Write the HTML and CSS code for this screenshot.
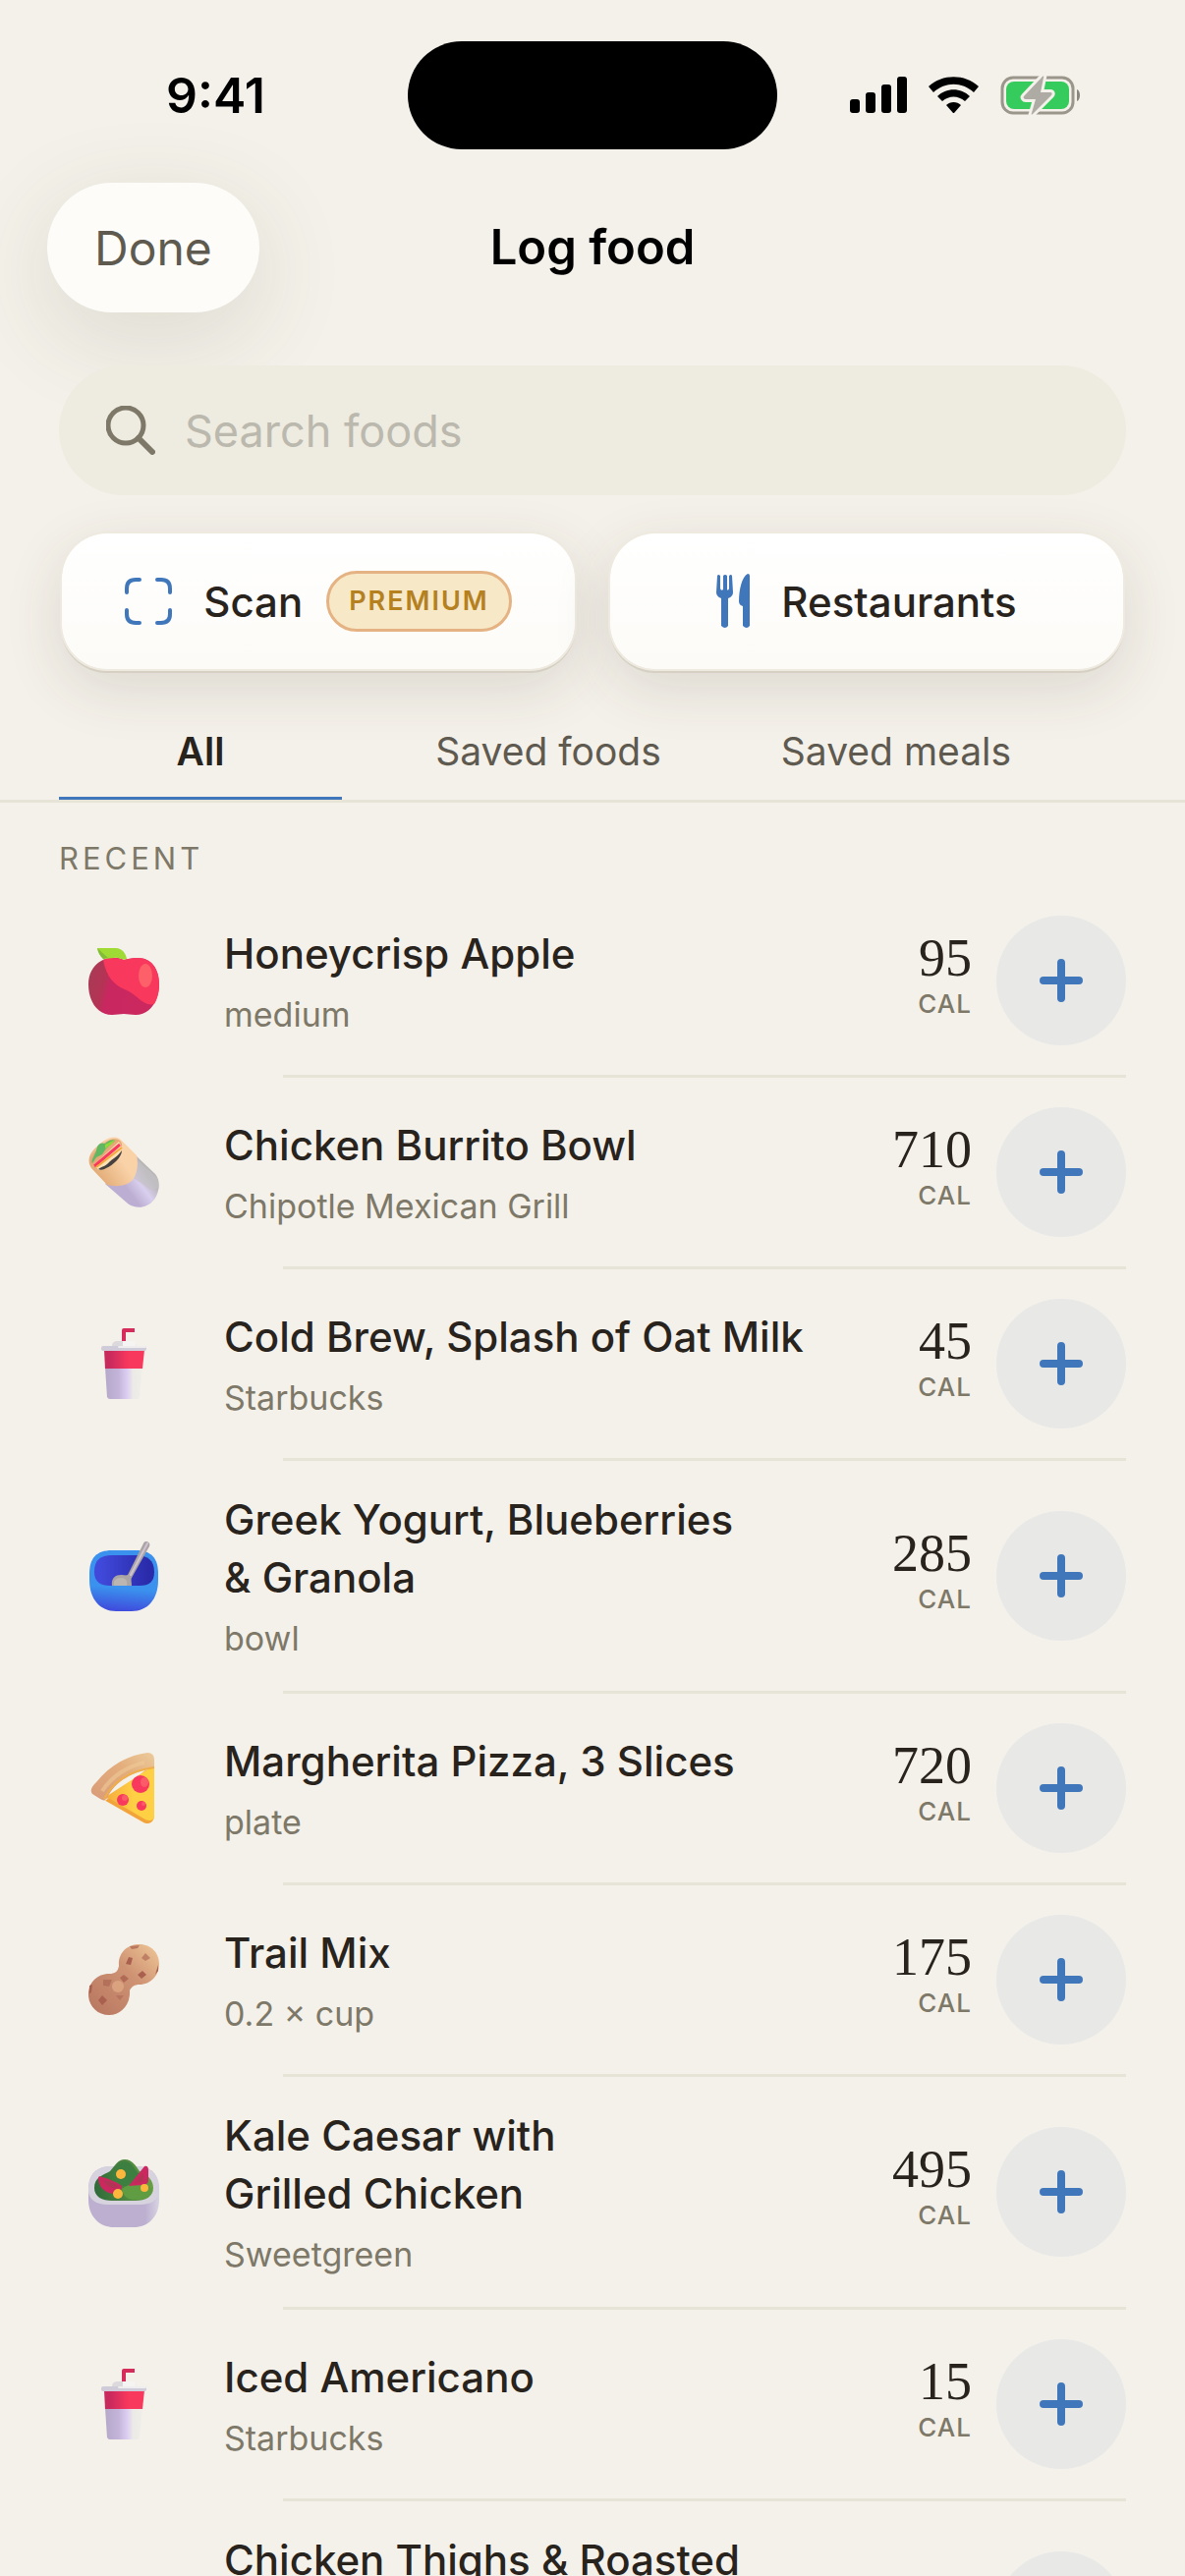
FILE: index.html
```html
<!DOCTYPE html>
<html lang="en">
<head>
    <meta charset="UTF-8">
    <meta name="viewport" content="width=device-width, initial-scale=1.0">
    <title>Log food</title>
    <link rel="stylesheet" href="styles.css">
</head>
<body>
<!-- shared icons -->
<svg class="sprite" aria-hidden="true">
    <defs>
        <linearGradient id="apple-body" x1="0" y1="0.4" x2="1" y2="0.6">
            <stop offset="0" stop-color="#a93a55"/>
            <stop offset="0.22" stop-color="#b53355"/>
            <stop offset="0.3" stop-color="#c8285f"/>
            <stop offset="1" stop-color="#cc2860"/>
        </linearGradient>
        <linearGradient id="cup-body">
            <stop offset="0" stop-color="#b5a8c8"/>
            <stop offset="0.35" stop-color="#c3b3da"/>
            <stop offset="0.6" stop-color="#dccff2"/>
            <stop offset="0.75" stop-color="#eceae6"/>
            <stop offset="1" stop-color="#f0eee8"/>
        </linearGradient>
        <linearGradient id="cup-red">
            <stop offset="0.15" stop-color="#c92a5e"/>
            <stop offset="0.6" stop-color="#f8385c"/>
        </linearGradient>
        <linearGradient id="foil" x1="0.2" y1="0.8" x2="0.9" y2="0.3">
            <stop offset="0.3" stop-color="#bcaed2"/>
            <stop offset="0.6" stop-color="#d9cfee"/>
            <stop offset="0.85" stop-color="#b9b6b8"/>
        </linearGradient>
        <linearGradient id="wrap" x1="0" y1="1" x2="1" y2="0.3">
            <stop offset="0.2" stop-color="#e2ab76"/>
            <stop offset="0.7" stop-color="#f9d2a8"/>
        </linearGradient>
        <linearGradient id="bowl-out" x1="0.3" y1="0" x2="0.2" y2="1">
            <stop offset="0.6" stop-color="#3a92ee"/>
            <stop offset="0.95" stop-color="#3f4fdd"/>
        </linearGradient>
        <linearGradient id="bowl-in">
            <stop offset="0.1" stop-color="#4049da"/>
            <stop offset="0.9" stop-color="#2a2bab"/>
        </linearGradient>
        <linearGradient id="crust" x1="0" y1="1" x2="1" y2="0">
            <stop offset="0" stop-color="#d99b78"/>
            <stop offset="0.6" stop-color="#e4ae7c"/>
            <stop offset="1" stop-color="#eccb9c"/>
        </linearGradient>
        <linearGradient id="cheese" x1="0" y1="0.5" x2="1" y2="0.5">
            <stop offset="0" stop-color="#f5a93c"/>
            <stop offset="0.6" stop-color="#ffd044"/>
        </linearGradient>
        <linearGradient id="peanut-shell" x1="0" y1="1" x2="1" y2="0">
            <stop offset="0.1" stop-color="#bb7a63"/>
            <stop offset="0.6" stop-color="#cf9474"/>
            <stop offset="1" stop-color="#f0c898"/>
        </linearGradient>
        <linearGradient id="leaves">
            <stop offset="0" stop-color="#2f6a3a"/>
            <stop offset="1" stop-color="#68a043"/>
        </linearGradient>
        <linearGradient id="dish">
            <stop offset="0.8" stop-color="#bcafd0"/>
            <stop offset="1" stop-color="#d8d4e2"/>
        </linearGradient>
    </defs>

    <symbol id="plus" viewBox="0 0 44 44">
        <path d="M22 4v36M4 22h36" stroke="#4077bb" stroke-width="8" stroke-linecap="round"/>
    </symbol>

    <symbol id="apple" viewBox="0 0 72 72">
        <path d="M36 15C30 12 20 12 13 16C4 21 0 30 0 40C0 57 9 71 24 71C29 71 32 70 36 70C40 70 43 71 48 71C63 71 72 56 72 40C72 24 64 13 50 13C44 13 40 14 36 15Z" fill="url(#apple-body)"/>
        <path d="M15 15C22 12 30 13 36 15C40 14 44 13 50 13C64 13 72 24 72 40C72 48 70 55 67 60C56 63 49 50 39 46C26 41 18 32 15 15Z" fill="#f8385c"/>
        <ellipse cx="58" cy="31" rx="7" ry="12" fill="#fd6068"/>
        <path d="M9 3H28C34 3 38 8 39 14C34 16 31 12 26 13L15 14C12 11 10 8 9 3Z" fill="#a0da35"/>
        <path d="M9 3L20 13L15 14C12 11 10 8 9 3Z" fill="#82bd38"/>
    </symbol>

    <symbol id="burrito" viewBox="0 0 72 72">
        <path d="M48 19L68 38C74 45 72 57 67 64C60 73 48 74 40 68L17 48Z" fill="url(#foil)"/>
        <path d="M50 24L70 42L72 52L63 54L43 40Z" fill="#c5c2c6" opacity="0.7"/>
        <path d="M3 32C-2 24 1 16 10 9C19 0 28 -2 34 4L49 19C51 27 50 37 45 44C38 51 27 51 19 49Z" fill="url(#wrap)"/>
        <path d="M3 29C0 24 5 16 12 10C20 2 29 0 33 5C36 9 33 16 27 23C20 31 10 36 5 31Z" fill="#e5a877"/>
        <path d="M5 29L31 5L34 11C32 20 22 30 11 34Z" fill="#fde1b4"/>
        <path d="M10 33C14 30 18 30 21 26C25 22 28 22 34 14C34 21 25 29 18 32C15 34 12 34 10 33Z" fill="#47423f"/>
        <path d="M6 30L32 8" stroke="#f8385c" stroke-width="3"/>
        <path d="M8 31L34 11" stroke="#f4a73a" stroke-width="2"/>
        <path d="M4 27C2 25 6 20 8 14C9 8 12 5 17 7C20 4 25 2 27 4L18 12L14 18L8 21Z" fill="#62b862"/>
        <path d="M17 8L27 3L24 7L17 12Z" fill="#8edb35"/>
    </symbol>

    <symbol id="cup" viewBox="0 0 72 72">
        <path d="M36 15V2H47" fill="none" stroke="#d52c5c" stroke-width="4" stroke-linejoin="round"/>
        <path d="M24 18C24 14 27 13 30 13H42C46 13 48 15 49 18Z" fill="#dcd9dc"/>
        <path d="M35 13H46C48 14 48 17 49 18H35Z" fill="#f5f4f2"/>
        <path d="M17 40H55L52 70C52 71 51 72 50 72H22C20 72 20 71 19 70Z" fill="url(#cup-body)"/>
        <path d="M16 22H57L55 41H17Z" fill="url(#cup-red)"/>
        <rect x="13" y="18" width="46" height="5" rx="2" fill="#d0cbd8"/>
        <rect x="30" y="18" width="29" height="2" rx="1" fill="#efedee"/>
    </symbol>

    <symbol id="bowl" viewBox="0 0 72 72">
        <path d="M1 34C1 18 8 10 24 10H48C64 10 71 18 71 34V40C71 60 60 72 44 72H28C12 72 1 60 1 40Z" fill="url(#bowl-out)"/>
        <path d="M6 32C6 20 12 15 24 15H48C60 15 67 20 67 32C67 42 62 46 52 46H22C12 46 6 42 6 32Z" fill="url(#bowl-in)"/>
        <path d="M24 46C23 39 27 35 33 35C36 35 38 36 40 35L56 3C58 -1 64 2 62 6L44 38C43 40 44 42 44 46Z" fill="#aaa4a5"/>
        <path d="M26 46C25 41 28 38 33 38C38 38 40 41 39 46Z" fill="#bcb6b2"/>
        <path d="M60 3L43 35" stroke="#cfc3d2" stroke-width="2" stroke-linecap="round"/>
    </symbol>

    <symbol id="pizza" viewBox="0 0 72 72">
        <path d="M17 49L58 18L67 16V64C67 70 62 74 56 71L14 47Z" fill="#f2a43a"/>
        <path d="M16 46L62 16L67 15V66C66 69 62 70 58 68L22 47Z" fill="url(#cheese)"/>
        <path d="M4 42C1 38 4 34 8 30C22 12 42 2 60 0C65 0 67 3 67 7V15C46 19 27 29 19 46C17 49 15 49 12 47Z" fill="url(#crust)"/>
        <path d="M16 47C26 27 46 18 67 15" stroke="#efae4a" stroke-width="2" fill="none"/>
        <path d="M14 39C24 24 40 14 57 10" stroke="#efca98" stroke-width="4" fill="none" opacity="0.6"/>
        <circle cx="53" cy="32" r="9" fill="#f8385c"/>
        <circle cx="35" cy="48" r="6" fill="#f8385c"/>
        <circle cx="54" cy="54" r="5" fill="#f8385c"/>
        <ellipse cx="57" cy="30" rx="4" ry="5" fill="#fb5a68"/>
        <circle cx="37" cy="46" r="3" fill="#fb5a68"/>
        <circle cx="56" cy="52" r="2" fill="#fb5a68"/>
    </symbol>

    <symbol id="peanut" viewBox="0 0 72 72">
        <path d="M52 0C64 0 72 9 72 20C72 32 63 41 52 41C47 41 44 43 42 47C43 62 33 72 21 72C9 72 0 63 0 51C0 39 9 30 21 30C27 30 30 28 31 22C30 9 39 0 52 0Z" fill="url(#peanut-shell)"/>
        <g fill="#a9604f">
            <path d="M41 13L45 14L43 21L38 20Z"/>
            <path d="M58 9L63 14L58 17L54 14Z" opacity="0.6"/>
            <path d="M55 27L59 31L54 35L50 31Z"/>
            <path d="M36 31L41 35L36 39L32 34Z" opacity="0.8"/>
            <path d="M15 36H24L21 43L15 42Z" opacity="0.6"/>
            <path d="M14 52L19 57L14 62L10 57Z"/>
            <path d="M28 52H36L32 57Z" opacity="0.5"/>
            <path d="M42 2L52 1L50 4L44 5Z" opacity="0.7"/>
            <path d="M71 21V27L68 31Z"/>
            <path d="M1 42L4 41L3 49L1 50Z"/>
        </g>
        <circle cx="30" cy="43" r="6" fill="#e3ad87" opacity="0.7"/>
    </symbol>

    <symbol id="salad" viewBox="0 0 72 72">
        <path d="M0 34C0 18 8 10 24 10H48C64 10 72 18 72 34V44C72 62 60 72 46 72H26C12 72 0 62 0 44Z" fill="url(#dish)"/>
        <path d="M0 34C0 18 8 10 24 10H48C64 10 72 18 72 34C72 44 64 49 52 49H20C8 49 0 44 0 34Z" fill="#d6d3df"/>
        <path d="M6 32C6 21 15 19 22 15C28 8 30 3 37 3C44 3 48 9 52 15C60 18 66 24 66 32C66 41 58 45 48 45H24C14 45 6 41 6 32Z" fill="url(#leaves)"/>
        <path d="M24 20C28 11 31 5 37 5C44 5 47 14 52 18C47 26 40 32 33 30Z" fill="#3c7f40"/>
        <path d="M34 33C44 25 58 28 65 33C65 40 57 44 46 44C40 44 35 40 34 33Z" fill="#5f9c42"/>
        <path d="M10 22C10 20 12 20 14 21C22 23 30 27 34 30C34 34 31 37 25 38C16 37 10 30 10 22Z" fill="#cc2860"/>
        <path d="M15 24C22 25 28 28 31 31C26 34 18 31 15 24Z" fill="#b13355"/>
        <path d="M57 10C60 9 61 11 61 14V24C61 28 58 29 54 29L41 30Z" fill="#cc2860"/>
        <path d="M56 17V25L47 27Z" fill="#b13355"/>
        <g fill="#fcb73c">
            <circle cx="33" cy="18" r="5"/>
            <circle cx="30" cy="38" r="5"/>
            <circle cx="57" cy="32" r="4"/>
        </g>
    </symbol>
</svg>

<div class="app">
    <div class="status-bar">
        <div class="time">9:41</div>
        <div class="island"></div>
        <div class="indicators">
            <svg width="58" height="38" viewBox="0 0 58 38">
                <rect x="0" y="23" width="10" height="14" rx="3"/>
                <rect x="16" y="16" width="10" height="21" rx="3"/>
                <rect x="32" y="8" width="10" height="29" rx="3"/>
                <rect x="48" y="0" width="10" height="37" rx="3"/>
            </svg>
            <svg width="51" height="38" viewBox="0 0 51 38">
                <path d="M0 10C14 -3 37 -3 51 10L46 16C34 5 17 5 5 16Z"/>
                <path d="M9 20C18 11 33 11 42 20L37 25C30 19 21 19 14 25Z"/>
                <path d="M18 29C22 25 29 25 33 29L26 37H25Z"/>
            </svg>
            <svg width="82" height="42" viewBox="0 0 82 42">
                <rect x="2" y="3" width="72" height="36" rx="11" fill="none" stroke="#9a968c" stroke-width="3"/>
                <path d="M78 15C82 16 82 26 78 27Z" fill="#8a867d"/>
                <rect x="6" y="7" width="64" height="28" rx="8" fill="#35cb5d"/>
                <path d="M42 3C43 1 45 1 44 3L41 18H51C53 18 53 20 52 21L34 39C32 41 31 41 32 39L36 25H26C24 25 23 23 24 22Z" fill="#aeaaa4" stroke="#f4f1ea" stroke-width="6" stroke-linejoin="round" paint-order="stroke"/>
            </svg>
        </div>
    </div>

    <header class="nav">
        <button class="done">Done</button>
        <h1 class="title">Log food</h1>
    </header>

    <label class="search">
        <svg width="50" height="50" viewBox="0 0 50 50">
            <circle cx="20" cy="20" r="18"/>
            <path d="M33 33L47 47" stroke-width="6"/>
        </svg>
        <input type="text" placeholder="Search foods" aria-label="Search foods">
    </label>

    <div class="actions">
        <button class="action">
            <svg width="48" height="48" viewBox="0 0 48 48">
                <path d="M2 15V11Q2 2 11 2H15M33 2H37Q46 2 46 11V15M46 33V37Q46 46 37 46H33M15 46H11Q2 46 2 37V33" fill="none" stroke="#4077bb" stroke-width="4" stroke-linecap="round"/>
            </svg>
            <span>Scan</span>
            <span class="badge">PREMIUM</span>
        </button>
        <button class="action">
            <svg width="34" height="56" viewBox="0 0 34 56" fill="#4077bb">
                <path d="M1 2Q2 0 4 2V15Q5 18 7 16V2Q9 0 11 2V16Q12 18 13 15V2Q15 0 16 2L17 19Q17 23 12 25V53Q9 57 5 53V25Q0 23 0 19Z"/>
                <path d="M32 0Q34 0 34 2V53Q31 57 27 53V33Q23 32 23 28C23 16 26 3 32 0Z"/>
            </svg>
            <span>Restaurants</span>
        </button>
    </div>

    <nav class="tabs">
        <button class="tab active">All</button>
        <button class="tab">Saved foods</button>
        <button class="tab">Saved meals</button>
    </nav>

    <h2 class="section-title">RECENT</h2>
    <ul class="foods">
        <li class="food">
            <div class="row">
                <div class="picture"><svg><use href="#apple"/></svg></div>
                <div class="info">
                    <div class="name">Honeycrisp Apple</div>
                    <div class="detail">medium</div>
                </div>
                <div class="calories"><span class="number">95</span><span class="unit">CAL</span></div>
                <button class="add" aria-label="Add"><svg><use href="#plus"/></svg></button>
            </div>
        </li>
        <li class="food">
            <div class="row">
                <div class="picture"><svg><use href="#burrito"/></svg></div>
                <div class="info">
                    <div class="name">Chicken Burrito Bowl</div>
                    <div class="detail">Chipotle Mexican Grill</div>
                </div>
                <div class="calories"><span class="number">710</span><span class="unit">CAL</span></div>
                <button class="add" aria-label="Add"><svg><use href="#plus"/></svg></button>
            </div>
        </li>
        <li class="food">
            <div class="row">
                <div class="picture"><svg><use href="#cup"/></svg></div>
                <div class="info">
                    <div class="name">Cold Brew, Splash of Oat Milk</div>
                    <div class="detail">Starbucks</div>
                </div>
                <div class="calories"><span class="number">45</span><span class="unit">CAL</span></div>
                <button class="add" aria-label="Add"><svg><use href="#plus"/></svg></button>
            </div>
        </li>
        <li class="food">
            <div class="row">
                <div class="picture"><svg><use href="#bowl"/></svg></div>
                <div class="info">
                    <div class="name">Greek Yogurt, Blueberries<br>&amp; Granola</div>
                    <div class="detail">bowl</div>
                </div>
                <div class="calories"><span class="number">285</span><span class="unit">CAL</span></div>
                <button class="add" aria-label="Add"><svg><use href="#plus"/></svg></button>
            </div>
        </li>
        <li class="food">
            <div class="row">
                <div class="picture"><svg><use href="#pizza"/></svg></div>
                <div class="info">
                    <div class="name">Margherita Pizza, 3 Slices</div>
                    <div class="detail">plate</div>
                </div>
                <div class="calories"><span class="number">720</span><span class="unit">CAL</span></div>
                <button class="add" aria-label="Add"><svg><use href="#plus"/></svg></button>
            </div>
        </li>
        <li class="food">
            <div class="row">
                <div class="picture"><svg><use href="#peanut"/></svg></div>
                <div class="info">
                    <div class="name">Trail Mix</div>
                    <div class="detail">0.2 × cup</div>
                </div>
                <div class="calories"><span class="number">175</span><span class="unit">CAL</span></div>
                <button class="add" aria-label="Add"><svg><use href="#plus"/></svg></button>
            </div>
        </li>
        <li class="food">
            <div class="row">
                <div class="picture"><svg><use href="#salad"/></svg></div>
                <div class="info">
                    <div class="name">Kale Caesar with<br>Grilled Chicken</div>
                    <div class="detail">Sweetgreen</div>
                </div>
                <div class="calories"><span class="number">495</span><span class="unit">CAL</span></div>
                <button class="add" aria-label="Add"><svg><use href="#plus"/></svg></button>
            </div>
        </li>
        <li class="food">
            <div class="row">
                <div class="picture"><svg><use href="#cup"/></svg></div>
                <div class="info">
                    <div class="name">Iced Americano</div>
                    <div class="detail">Starbucks</div>
                </div>
                <div class="calories"><span class="number">15</span><span class="unit">CAL</span></div>
                <button class="add" aria-label="Add"><svg><use href="#plus"/></svg></button>
            </div>
        </li>
        <li class="food">
            <div class="row tall">
                <div class="picture"></div>
                <div class="info">
                    <div class="name">Chicken Thighs &amp; Roasted</div>
                </div>
                <button class="add" aria-label="Add"><svg><use href="#plus"/></svg></button>
            </div>
        </li>
    </ul>
</div>
</body>
</html>
```

FILE: styles.css
```css
* {
    box-sizing: border-box;
}

body {
    margin: 0;
    background: #f4f1ea;
    color: #28231c;
    font-family: Inter, "Liberation Sans", sans-serif;
}

button {
    border: none;
    padding: 0;
    background: none;
    color: inherit;
    font-family: inherit;
    cursor: pointer;
}

.sprite {
    position: absolute;
    width: 0;
    height: 0;
}

.app {
    display: flex;
    flex-direction: column;
    height: 100vh;
    overflow: hidden;
}

/* status bar */
.status-bar {
    display: grid;
    grid-template-columns: 1fr 376px 1fr;
    align-items: center;
    padding: 42px 0 34px;
}

.time {
    padding-left: 24px;
    color: #000;
    font-size: 50px;
    font-weight: 600;
    line-height: 60px;
    text-align: center;
}

.island {
    height: 110px;
    border-radius: 55px;
    background: #000;
}

.indicators {
    display: flex;
    align-items: center;
    justify-content: center;
    gap: 22px;
    padding-right: 32px;
}

/* top nav */
.nav {
    display: grid;
    grid-template-columns: 1fr auto 1fr;
    align-items: center;
    padding: 0 48px;
}

.done {
    justify-self: start;
    height: 132px;
    padding: 0 48px;
    border-radius: 66px;
    background: #fdfcf8;
    box-shadow: 0 24px 96px rgba(80, 75, 50, 0.14);
    color: #5f5a50;
    font-size: 48px;
}

.title {
    margin: 0;
    color: #000;
    font-size: 49px;
    font-weight: 600;
    line-height: 60px;
}

.search {
    display: flex;
    align-items: center;
    gap: 30px;
    height: 132px;
    flex-shrink: 0;
    margin: 54px 60px 0;
    padding: 0 48px;
    border-radius: 66px;
    background: #eeebe0;
}

.search svg {
    fill: none;
    stroke: #7d7868;
    stroke-width: 5;
    stroke-linecap: round;
}

.search input {
    flex: 1;
    min-width: 0;
    padding: 0;
    border: none;
    outline: none;
    background: none;
    color: #28231c;
    font-family: inherit;
    font-size: 45px;
}

.search input::placeholder {
    color: #bbb8ae;
    opacity: 1;
}

.actions {
    display: grid;
    grid-template-columns: 1fr 1fr;
    gap: 36px;
    margin: 39px 63px 48px;
}

.action {
    display: flex;
    align-items: center;
    justify-content: center;
    gap: 24px;
    height: 138px;
    border-radius: 46px;
    background: linear-gradient(#fff, #fcfbf7);
    box-shadow: 0 0 0 2px #eeeadf, 0 3px 0 1px #d6cfc3, 0 18px 60px rgba(70, 60, 40, 0.14);
    font-size: 42px;
    font-weight: 500;
}

.action svg {
    margin-right: 8px;
}

.badge {
    padding: 0 20px;
    border: 3px solid #e5b383;
    border-radius: 31px;
    background: #f7e9c8;
    color: #b5801f;
    font-size: 27px;
    font-weight: 600;
    line-height: 56px;
    letter-spacing: 2px;
}

.tabs {
    display: flex;
    gap: 66px;
    padding: 0 60px;
    border-bottom: 3px solid #e6e3d7;
}

.tab {
    min-width: 288px;
    padding-bottom: 10px;
    border-bottom: 3px solid transparent;
    color: #5f5a50;
    font-size: 39px;
    line-height: 72px;
}

.tab.active {
    border-bottom-color: #4077bb;
    border-radius: 3px 3px 0 0;
    color: #28231c;
    font-weight: 600;
}

.section-title {
    margin: 0;
    padding: 36px 60px 7px;
    color: #7d7868;
    font-size: 31px;
    font-weight: 400;
    line-height: 42px;
    letter-spacing: 4px;
}

/* food list */
.foods {
    flex: 1;
    min-height: 0;
    margin: 0;
    padding: 0 60px;
    list-style: none;
}

.food::after {
    content: "";
    display: block;
    height: 3px;
    margin-left: 228px;
    background: #e6e3d7;
}

.row {
    display: flex;
    align-items: center;
    padding: 30px 0;
}

.tall {
    height: 234px;
}

.tall .info {
    align-self: flex-start;
}

.picture {
    display: flex;
    justify-content: center;
    width: 132px;
    margin-right: 36px;
}

.picture svg {
    width: 72px;
    height: 72px;
}

.info {
    flex: 1;
}

.name {
    font-size: 42px;
    font-weight: 500;
    line-height: 59px;
}

.detail {
    margin-top: 9px;
    color: #7d7868;
    font-size: 34px;
    line-height: 47px;
}

.calories {
    display: flex;
    flex-direction: column;
    align-items: flex-end;
    margin-right: 25px;
}

.number {
    font-family: "Liberation Serif", serif;
    font-size: 54px;
    line-height: 48px;
}

.unit {
    color: #7d7868;
    font-size: 26px;
    font-weight: 500;
    line-height: 46px;
    letter-spacing: 1px;
}

.add {
    display: flex;
    align-items: center;
    justify-content: center;
    width: 132px;
    height: 132px;
    border-radius: 50%;
    background: #e8e8e7;
}

.add svg {
    width: 44px;
    height: 44px;
}
```
